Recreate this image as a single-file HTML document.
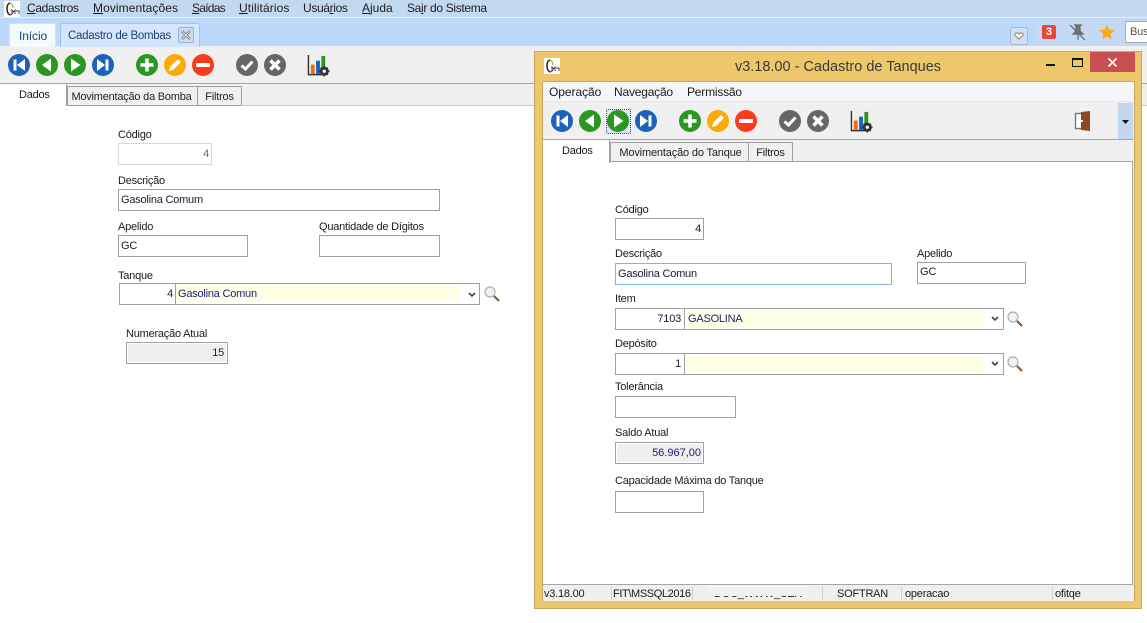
<!DOCTYPE html>
<html><head><meta charset="utf-8"><style>
html,body{margin:0;padding:0;width:1147px;height:623px;overflow:hidden;background:#fff}
body{position:relative;font-family:"Liberation Sans",sans-serif;font-size:11px;color:#1a1a1a;letter-spacing:-.22px}
.a{position:absolute;box-sizing:border-box}
.t{position:absolute;white-space:nowrap;line-height:14px}
.m{font-size:12px;color:#1c1c1c;letter-spacing:0}
.i{position:absolute;box-sizing:border-box;border:1px solid #a0a0a0;background:#fff;height:22px;line-height:21px;padding:0 2px;white-space:nowrap;font-size:11px;color:#1a1a30}
.r{text-align:right;padding-right:2px}
.y{position:absolute;background:#ffffe6;height:16px;line-height:16px;color:#1a1a80;padding-left:2px;box-sizing:border-box;font-size:11px}
.tab{position:absolute;box-sizing:border-box;background:#f0f0f0;border:1px solid #a0a0a0;border-bottom:1px solid #a0a0a0;height:20px;line-height:20px;text-align:center;font-size:11px;color:#222;white-space:nowrap}
svg{position:absolute;overflow:visible}
u{text-decoration:underline}
</style></head><body>
<svg width="0" height="0" style="position:absolute"><defs>
<symbol id="first" viewBox="0 0 22 22"><circle cx="11" cy="11" r="11" fill="#1b62b8"/><rect x="5.500" y="5.500" width="3" height="11" fill="#fff"/><path d="M17 5v12l-8-6z" fill="#fff"/></symbol>
<symbol id="prev" viewBox="0 0 22 22"><circle cx="11" cy="11" r="11" fill="#2c9623"/><path d="M15 4.500v13L6 11z" fill="#fff"/></symbol>
<symbol id="next" viewBox="0 0 22 22"><circle cx="11" cy="11" r="11" fill="#2c9623"/><path d="M7 4.500v13l9.500-6.500z" fill="#fff"/></symbol>
<symbol id="last" viewBox="0 0 22 22"><circle cx="11" cy="11" r="11" fill="#1b62b8"/><rect x="13.500" y="5.500" width="3" height="11" fill="#fff"/><path d="M5 5v12l8-6z" fill="#fff"/></symbol>
<symbol id="plus" viewBox="0 0 22 22"><circle cx="11" cy="11" r="11" fill="#2c9623"/><path d="M11 4.500v13M4.500 11h13" stroke="#fff" stroke-width="3.500"/></symbol>
<symbol id="edit" viewBox="0 0 22 22"><circle cx="11" cy="11" r="11" fill="#fbab06"/><path d="M5 17l1-4 8-8 3 3-8 8z" fill="#fff"/></symbol>
<symbol id="minus" viewBox="0 0 22 22"><circle cx="11" cy="11" r="11" fill="#fa3a1c"/><rect x="4" y="9" width="14" height="4" rx="1" fill="#fff"/></symbol>
<symbol id="ok" viewBox="0 0 22 22"><circle cx="11" cy="11" r="11" fill="#666"/><path d="M5.500 11.500l4 3.500 7-7.500" fill="none" stroke="#fff" stroke-width="3"/></symbol>
<symbol id="no" viewBox="0 0 22 22"><circle cx="11" cy="11" r="11" fill="#666"/><path d="M6.500 6.500l9 9M15.500 6.500l-9 9" stroke="#fff" stroke-width="3.500"/></symbol>
<symbol id="chart" viewBox="0 0 24 24"><path d="M1.500 1v20.500H16" fill="none" stroke="#333" stroke-width="1.500"/><rect x="4" y="11" width="4" height="10" fill="#f26a12"/><rect x="9.500" y="7" width="4" height="14" fill="#1b62b8"/><rect x="15" y="2" width="4" height="14" fill="#2c9623"/><circle cx="18" cy="18" r="3.500" fill="none" stroke="#333" stroke-width="2.500"/><path d="M18 12.500v11M12.500 18h11M14.200 14.200l7.600 7.600M21.800 14.200l-7.600 7.600" stroke="#333" stroke-width="1.600"/><circle cx="18" cy="18" r="1.700" fill="#fff"/></symbol>
<symbol id="lens" viewBox="0 0 16 16"><circle cx="6" cy="6" r="5" fill="#eef3f6" stroke="#a8b2ba" stroke-width="1.200"/><path d="M10 10l5 5" stroke="#8a5a34" stroke-width="2.200"/></symbol>
<symbol id="chev" viewBox="0 0 8 6"><path d="M1 1l3 3 3-3" fill="none" stroke="#444" stroke-width="1.600"/></symbol>
<symbol id="logo" viewBox="0 0 16 16"><rect width="16" height="16" fill="#fff"/><path d="M6 2C2 3 2 12 6 14" fill="none" stroke="#222" stroke-width="1.500"/><path d="M6 2c2 1 3 3 3 5" fill="none" stroke="#c9a020" stroke-width="1.200"/><path d="M6 14c1 0 2-1 3-2" fill="none" stroke="#a02030" stroke-width="1.200"/><path d="M8 13V9l1.500 2L11 9v4M12 10h3v3" fill="none" stroke="#333" stroke-width=".9"/></symbol>
</defs></svg>

<!-- top chrome -->
<div class="a" style="left:0;top:0;width:1147px;height:17px;background:#c3d9f0"></div>
<div class="a" style="left:0;top:17px;width:1147px;height:1px;background:#e6f0fb"></div>
<div class="a" style="left:0;top:18px;width:1147px;height:28px;background:#bcd9fc"></div>
<div class="a" style="left:1035px;top:18px;width:112px;height:28px;background:#c3d9f4"></div>
<div class="a" style="left:0;top:46px;width:1147px;height:37px;background:#f0f0f0"></div>
<div class="a" style="left:0;top:83px;width:1147px;height:1px;background:#a6a6a6"></div>
<div class="a" style="left:0;top:84px;width:1147px;height:22px;background:#f0f0f0"></div>
<div class="a" style="left:68px;top:105px;width:1079px;height:1px;background:#c8c8c8"></div>

<svg style="left:4px;top:1px" width="16" height="16"><use href="#logo"/></svg>
<span class="t m" style="left:27px;top:1px;letter-spacing:-.35px"><u>C</u>adastros</span>
<span class="t m" style="left:93px;top:1px;letter-spacing:.08px"><u>M</u>ovimentações</span>
<span class="t m" style="left:192px;top:1px;letter-spacing:-.75px"><u>S</u>aídas</span>
<span class="t m" style="left:239px;top:1px;letter-spacing:.1px"><u>U</u>tilitários</span>
<span class="t m" style="left:303px;top:1px;letter-spacing:-.35px">Usuá<u>r</u>ios</span>
<span class="t m" style="left:362px;top:1px"><u>A</u>juda</span>
<span class="t m" style="left:407px;top:1px;letter-spacing:-.33px">Sa<u>i</u>r do Sistema</span>

<div class="a" style="left:9px;top:23px;width:47px;height:24px;background:#f4fbff;border:1px solid #cfe3f7;border-bottom:0;border-radius:3px 3px 0 0"></div>
<span class="t" style="left:19px;top:29px;font-size:12px;letter-spacing:-.1px;color:#1f3f78">Início</span>
<div class="a" style="left:60px;top:23px;width:140px;height:24px;background:#d4e6fa;border:1px solid #9fc4ec;border-bottom:0;border-radius:3px 3px 0 0"></div>
<span class="t" style="left:68px;top:29px;font-size:11.500px;letter-spacing:-.28px;color:#1f3f78">Cadastro de Bombas</span>
<div class="a" style="left:178px;top:27px;width:16px;height:16px;background:#c8dcf2;border:1px solid #9bb6d4;border-radius:2px"></div>
<svg style="left:181px;top:30px" width="10" height="10"><path d="M1 1l8 8M9 1l-8 8" stroke="#777" stroke-width="2.400"/><path d="M1 1l8 8M9 1l-8 8" stroke="#fff" stroke-width=".8"/></svg>

<!-- right top icons -->
<div class="a" style="left:1010px;top:27px;width:18px;height:18px;background:#cfe0f4;border:1px solid #9fb9d8;border-radius:3px"></div>
<svg style="left:1014px;top:32px" width="10" height="8"><path d="M5 7L1 3.500C0 1 3.500 0 5 2c1.500-2 5-1 4 1.500z" fill="#fff" stroke="#8a8040"/></svg>
<div class="a" style="left:1042px;top:25px;width:14px;height:14px;background:#e8483c;border-radius:2px;color:#fff;font-weight:bold;font-size:11px;line-height:14px;text-align:center">3</div>
<svg style="left:1069px;top:24px" width="18" height="17"><path d="M5 1h8M7 1v6L4 10h10l-3-3V1M9 10v6" fill="#777" stroke="#666" stroke-width="1.200"/><path d="M1 1l15 15" stroke="#666" stroke-width="1.200"/></svg>
<svg style="left:1099px;top:24px" width="16" height="16" viewBox="0 0 16 16"><path d="M8 .5l2.300 5 5.400.6-4 3.700 1.100 5.400L8 12.500l-4.800 2.700 1.100-5.400-4-3.700 5.400-.6z" fill="#fba91b"/></svg>
<div class="a" style="left:1125px;top:21px;width:30px;height:22px;background:#fff;border:1px solid #aaa;padding-left:4px;line-height:20px;font-size:11px;color:#555">Busca</div>

<!-- toolbar left -->
<svg style="left:8px;top:54px" width="22" height="22"><use href="#first"/></svg>
<svg style="left:36px;top:54px" width="22" height="22"><use href="#prev"/></svg>
<svg style="left:64px;top:54px" width="22" height="22"><use href="#next"/></svg>
<svg style="left:92px;top:54px" width="22" height="22"><use href="#last"/></svg>
<svg style="left:136px;top:54px" width="22" height="22"><use href="#plus"/></svg>
<svg style="left:164px;top:54px" width="22" height="22"><use href="#edit"/></svg>
<svg style="left:192px;top:54px" width="22" height="22"><use href="#minus"/></svg>
<svg style="left:236px;top:54px" width="22" height="22"><use href="#ok"/></svg>
<svg style="left:264px;top:54px" width="22" height="22"><use href="#no"/></svg>
<svg style="left:307px;top:54px" width="23" height="23"><use href="#chart"/></svg>

<!-- tabs left -->
<div class="a" style="left:0;top:84px;width:67px;height:22px;background:#fff;border-right:1px solid #a0a0a0"></div>
<span class="t" style="left:19px;top:88px">Dados</span>
<div class="tab" style="left:67px;top:86px;width:131px;padding-right:2px">Movimentação da Bomba</div>
<div class="tab" style="left:197px;top:86px;width:45px">Filtros</div>

<!-- left form -->
<span class="t" style="left:118px;top:128px">Código</span>
<div class="i r" style="left:118px;top:143px;width:94px;border-color:#d8d8d8;color:#667">4</div>
<span class="t" style="left:118px;top:174px">Descrição</span>
<div class="i" style="left:118px;top:189px;width:322px">Gasolina Comum</div>
<span class="t" style="left:118px;top:220px">Apelido</span>
<div class="i" style="left:118px;top:235px;width:130px">GC</div>
<span class="t" style="left:319px;top:220px">Quantidade de Dígitos</span>
<div class="i" style="left:319px;top:235px;width:121px"></div>
<span class="t" style="left:118px;top:269px">Tanque</span>
<div class="i" style="left:119px;top:283px;width:361px"></div>
<div class="i r" style="left:119px;top:283px;width:57px">4</div>
<div class="y" style="left:176px;top:286px;width:284px">Gasolina Comun</div>
<svg style="left:468px;top:292px" width="8" height="6"><use href="#chev"/></svg>
<svg style="left:484px;top:286px" width="16" height="16"><use href="#lens"/></svg>
<span class="t" style="left:126px;top:327px">Numeração Atual</span>
<div class="i" style="left:126px;top:342px;width:102px"></div>
<div class="a" style="left:128px;top:344px;width:98px;height:18px;background:#efefef;text-align:right;padding-right:2px;line-height:19px;color:#1a1a40">15</div>

<!-- floating window -->
<div class="a" style="left:534px;top:51px;width:608px;height:558px;background:#eec76a;border:1px solid #c8a860"></div>
<svg style="left:544px;top:58px" width="16" height="16"><use href="#logo"/></svg>
<div class="t" style="left:535px;top:59px;width:606px;text-align:center;font-size:14.500px;line-height:16px;color:#3a3a3a;letter-spacing:0">v3.18.00 - Cadastro de Tanques</div>
<div class="a" style="left:1046px;top:64px;width:9px;height:2px;background:#111"></div>
<div class="a" style="left:1072px;top:58px;width:11px;height:9px;border:1px solid #111;border-top:2px solid #111"></div>
<div class="a" style="left:1090px;top:52px;width:45px;height:20px;background:#c75050"></div>
<svg style="left:1108px;top:58px" width="9" height="9"><path d="M.5.500l8 8M8.500.500l-8 8" stroke="#fff" stroke-width="1.600"/></svg>

<div class="a" style="left:542px;top:81px;width:593px;height:520px;background:#f0f0f0;border:1px solid #c8a860;border-bottom:0"></div>
<div class="a" style="left:543px;top:82px;width:591px;height:19px;background:#f5f6f8"></div>
<div class="a" style="left:543px;top:101px;width:591px;height:1px;background:#e8e8e8"></div>
<span class="t m" style="left:549px;top:85px;letter-spacing:-.05px">Operação</span>
<span class="t m" style="left:614px;top:85px;letter-spacing:-.2px">Navegação</span>
<span class="t m" style="left:687px;top:85px;letter-spacing:-.2px">Permissão</span>
<div class="a" style="left:543px;top:139px;width:590px;height:1px;background:#a6a6a6"></div>
<div class="a" style="left:1118px;top:103px;width:15px;height:36px;background:#c3d7ef"></div>
<svg style="left:1122px;top:120px" width="7" height="4"><path d="M0 0h7L3.500 4z" fill="#111"/></svg>

<div class="a" style="left:606px;top:109px;width:25px;height:25px;background:#dfe9f6;border:1px dotted #445;border-radius:2px"></div>
<svg style="left:551px;top:110px" width="22" height="22"><use href="#first"/></svg>
<svg style="left:579px;top:110px" width="22" height="22"><use href="#prev"/></svg>
<svg style="left:607px;top:110px" width="22" height="22"><use href="#next"/></svg>
<svg style="left:635px;top:110px" width="22" height="22"><use href="#last"/></svg>
<svg style="left:679px;top:110px" width="22" height="22"><use href="#plus"/></svg>
<svg style="left:707px;top:110px" width="22" height="22"><use href="#edit"/></svg>
<svg style="left:735px;top:110px" width="22" height="22"><use href="#minus"/></svg>
<svg style="left:779px;top:110px" width="22" height="22"><use href="#ok"/></svg>
<svg style="left:807px;top:110px" width="22" height="22"><use href="#no"/></svg>
<svg style="left:850px;top:110px" width="23" height="23"><use href="#chart"/></svg>
<svg style="left:1075px;top:110px" width="16" height="22"><rect x=".5" y="3.500" width="9" height="15" fill="#fff" stroke="#777" stroke-width="1.400"/><path d="M6 2l9-1v20l-9-1z" fill="#8b4a22"/><rect x="6" y="10" width="2" height="2" fill="#eee"/></svg>

<div class="a" style="left:543px;top:161px;width:590px;height:424px;background:#fff;border:1px solid #a6a6a6;border-left:0"></div>
<div class="a" style="left:543px;top:140px;width:67px;height:23px;background:#fff;border-right:1px solid #a0a0a0"></div>
<span class="t" style="left:562px;top:144px">Dados</span>
<div class="tab" style="left:610px;top:142px;width:139px;letter-spacing:-.16px;padding-left:2px">Movimentação do Tanque</div>
<div class="tab" style="left:748px;top:142px;width:45px">Filtros</div>

<!-- right form -->
<span class="t" style="left:615px;top:203px">Código</span>
<div class="i r" style="left:615px;top:218px;width:89px">4</div>
<span class="t" style="left:615px;top:247px">Descrição</span>
<div class="i" style="left:615px;top:263px;width:277px;border-color:#7eb4ea;padding-left:2px">Gasolina Comun</div>
<span class="t" style="left:917px;top:247px">Apelido</span>
<div class="i" style="left:917px;top:262px;width:109px;line-height:19px;padding-left:2px">GC</div>
<span class="t" style="left:615px;top:292px">Item</span>
<div class="i" style="left:615px;top:308px;width:389px"></div>
<div class="i r" style="left:615px;top:308px;width:70px;padding-right:3px">7103</div>
<div class="y" style="left:686px;top:311px;width:298px">GASOLINA</div>
<svg style="left:991px;top:316px" width="8" height="6"><use href="#chev"/></svg>
<svg style="left:1007px;top:311px" width="16" height="16"><use href="#lens"/></svg>
<span class="t" style="left:615px;top:337px">Depósito</span>
<div class="i" style="left:615px;top:353px;width:389px"></div>
<div class="i r" style="left:615px;top:353px;width:70px;padding-right:3px">1</div>
<div class="y" style="left:686px;top:356px;width:298px"></div>
<svg style="left:991px;top:361px" width="8" height="6"><use href="#chev"/></svg>
<svg style="left:1007px;top:356px" width="16" height="16"><use href="#lens"/></svg>
<span class="t" style="left:615px;top:380px">Tolerância</span>
<div class="i" style="left:615px;top:396px;width:121px"></div>
<span class="t" style="left:615px;top:426px">Saldo Atual</span>
<div class="i" style="left:615px;top:442px;width:89px"></div>
<div class="a" style="left:617px;top:444px;width:85px;height:18px;background:#efefef;text-align:right;padding-right:1px;line-height:18px;color:#1a1a80;letter-spacing:0">56.967,00</div>
<span class="t" style="left:615px;top:474px">Capacidade Máxima do Tanque</span>
<div class="i" style="left:615px;top:491px;width:89px"></div>

<!-- status bar -->
<div class="a" style="left:543px;top:586px;width:591px;height:15px;background:#f0f0f0"></div>
<span class="t" style="left:544px;top:587px">v3.18.00</span>
<span class="t" style="left:613px;top:587px;letter-spacing:-.38px">FIT\MSSQL2016</span>
<span class="t" style="left:714px;top:587px">DOC_WWW_SER</span>
<div class="a" style="left:708px;top:586px;width:98px;height:10px;background:#f0f0f0;border-top:1px solid #fff"></div>
<span class="t" style="left:837px;top:587px">SOFTRAN</span>
<span class="t" style="left:905px;top:587px">operacao</span>
<span class="t" style="left:1055px;top:587px">ofitqe</span>
<div class="a" style="left:611px;top:587px;width:1px;height:13px;background:#d0d0d0"></div>
<div class="a" style="left:692px;top:587px;width:1px;height:13px;background:#d0d0d0"></div>
<div class="a" style="left:822px;top:587px;width:1px;height:13px;background:#d0d0d0"></div>
<div class="a" style="left:901px;top:587px;width:1px;height:13px;background:#d0d0d0"></div>
<div class="a" style="left:1052px;top:587px;width:1px;height:13px;background:#d0d0d0"></div>
</body></html>
